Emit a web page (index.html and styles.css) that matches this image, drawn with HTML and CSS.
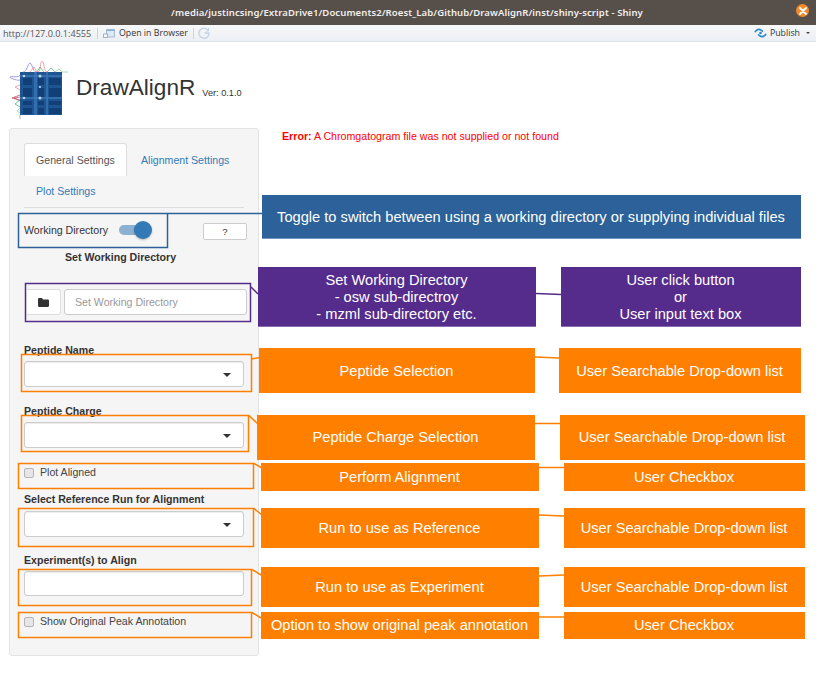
FILE: index.html
```html
<!DOCTYPE html>
<html lang="en">
<head>
<meta charset="utf-8">
<title>DrawAlignR</title>
<link rel="stylesheet" href="styles.css">
</head>
<body>
<header class="titlebar">
  <span class="titlebar-text">/media/justincsing/ExtraDrive1/Documents2/Roest_Lab/Github/DrawAlignR/inst/shiny-script - Shiny</span>
  <span class="close-btn"><svg width="8" height="8" viewBox="0 0 8 8"><path d="M1 1 7 7M7 1 1 7" stroke="#fff" stroke-width="1.8" stroke-linecap="round"/></svg></span>
</header>
<nav class="toolbar">
  <span class="url">http://127.0.0.1:4555</span>
  <span class="tool-sep"></span>
  <svg class="open-icon" width="12" height="10" viewBox="0 0 12 10"><path d="M3.5 1.5h8v7.5h-8z" fill="#dfe9f3" stroke="#8fb0cf" stroke-width=".8"/><path d="M3.5 1.5h8v1.5h-8z" fill="#8fb0cf"/><path d="M.5 6h4v3.5h-4z" fill="#fff" stroke="#7f9fbd" stroke-width=".8"/></svg>
  <span class="open-text">Open in Browser</span>
  <span class="tool-sep"></span>
  <svg class="refresh-icon" width="12" height="12" viewBox="0 0 12 12"><path d="M10.200 3.500A5 5 0 1 0 11 6H6.500" fill="none" stroke="#c3d2e2" stroke-width="1.300"/><path d="M10.500 1V4H7.500" fill="none" stroke="#c3d2e2" stroke-width="1"/></svg>
  <span class="publish">
    <svg width="13" height="10" viewBox="0 0 13 10"><path d="M1 4.2C2 1.6 5 .4 7.4 2.4L9 3.6" fill="none" stroke="#2e8bc9" stroke-width="1.7"/><path d="M12 5.8C11 8.4 8 9.600 5.600 7.600L4 6.400" fill="none" stroke="#2e8bc9" stroke-width="1.700"/><circle cx="6.500" cy="5" r="1.300" fill="#2e8bc9"/></svg>
    <span class="publish-text">Publish</span>
    <span class="publish-caret"></span>
  </span>
</nav>
<div class="app-header">
  <svg class="logo" width="60" height="62" viewBox="0 0 60 62">
    <rect x="10" y="11" width="42" height="43" fill="#1c5592"/>
    <g fill="#123f78">
      <rect x="13" y="17" width="9" height="7"/><rect x="28" y="17" width="6" height="7"/><rect x="39" y="17" width="12" height="7"/>
      <rect x="13" y="27" width="9" height="9"/><rect x="28" y="27" width="6" height="9"/><rect x="39" y="27" width="12" height="9"/>
      <rect x="13" y="40" width="9" height="4"/><rect x="28" y="40" width="6" height="4"/><rect x="39" y="40" width="12" height="4"/>
      <rect x="13" y="47" width="9" height="6"/><rect x="28" y="47" width="6" height="6"/><rect x="39" y="47" width="12" height="6"/>
    </g>
    <g fill="#3d78b8" fill-opacity=".7">
      <rect x="10" y="14" width="42" height="2"/><rect x="10" y="36" width="42" height="2"/><rect x="24" y="11" width="3" height="43"/><rect x="36" y="11" width="2" height="43"/>
    </g>
    <g fill="#b9d2e6"><circle cx="14" cy="15" r="1.300"/><circle cx="30" cy="15" r="1.500"/><circle cx="30" cy="26" r="1.100"/><circle cx="14" cy="37" r="1.300"/><circle cx="30" cy="37" r="1.500"/></g>
    <path d="M13 11C17 11 18 2 20 2S23 11 26 11" fill="none" stroke="#8a7fdc" stroke-width=".8"/>
    <path d="M20 11 24 6 27 11M28 11C31 11 30 0 32 0S34 11 37 11" fill="none" stroke="#ee8a98" stroke-width=".8"/>
    <path d="M27 11 30 6 34 11" fill="none" stroke="#4fae72" stroke-width=".8"/>
    <path d="M37 11 41 7 45 11" fill="none" stroke="#5cb58a" stroke-width=".8"/>
    <path d="M45 11 49 8 52 11H58" fill="none" stroke="#8fd59c" stroke-width=".8"/>
    <path d="M10 14C10 17 1 15 0 16S8 20 10 19" fill="none" stroke="#8a7fdc" stroke-width=".8"/>
    <path d="M10 24 5 26 10 29" fill="none" stroke="#ee8a98" stroke-width=".8"/>
    <path d="M10 34 2 37 10 39M10 36 4 37 10 40" fill="none" stroke="#c0506a" stroke-width=".8"/>
    <path d="M10 39 5 43 10 46" fill="none" stroke="#4fae72" stroke-width=".8"/>
    <path d="M10 47 7 50 10 52" fill="none" stroke="#8fd59c" stroke-width=".8"/>
    <path d="M10 54V58" stroke="#888" stroke-width=".6"/>
  </svg>
  <h1 class="app-title">DrawAlignR</h1>
  <span class="version">Ver: 0.1.0</span>
</div>
<main class="layout">
  <aside class="well">
    <ul class="tabs">
      <li class="tab tab-active">General Settings</li>
      <li class="tab tab-align">Alignment Settings</li>
      <li class="tab tab-plot">Plot Settings</li>
    </ul>
    <div class="wd-row">
      <span class="wd-label">Working Directory</span>
      <span class="switch"><span class="knob"></span></span>
      <span class="help-btn">?</span>
    </div>
    <div class="wd-title">Set Working Directory</div>
    <div class="dir-row">
      <span class="folder-btn"><svg width="11" height="9" viewBox="0 0 11 9"><path d="M0 1.200C0 .5.500 0 1.200 0H4l1 1.400h4.800c.7 0 1.200.5 1.200 1.200v5.200c0 .7-.5 1.200-1.200 1.200H1.200C.5 9 0 8.500 0 7.800z" fill="#333"/></svg></span>
      <span class="dir-input">Set Working Directory</span>
    </div>
    <label class="field-label label-name">Peptide Name</label>
    <div class="select"><span class="caret"></span></div>
    <label class="field-label label-charge">Peptide Charge</label>
    <div class="select"><span class="caret"></span></div>
    <div class="check-row check-aligned"><span class="checkbox"></span><span>Plot Aligned</span></div>
    <label class="field-label label-ref">Select Reference Run for Alignment</label>
    <div class="select select-ref"><span class="caret"></span></div>
    <label class="field-label label-exp">Experiment(s) to Align</label>
    <div class="select select-plain"></div>
    <div class="check-row check-peak"><span class="checkbox"></span><span>Show Original Peak Annotation</span></div>
  </aside>
  <p class="error"><strong>Error:</strong> A Chromgatogram file was not supplied or not found</p>
</main>

<svg class="connectors" width="816" height="680" viewBox="0 0 816 680">
  <g fill="none" stroke="#2c6299" stroke-width="1.500">
    <rect x="18.500" y="213.500" width="149" height="34"/>
    <path d="M168 213.500H262"/>
  </g>
  <g fill="none" stroke="#552c8c" stroke-width="1.500">
    <rect x="25.500" y="283.500" width="225" height="38"/>
    <path d="M251 287 258 294M536 293.500 561 294.500"/>
  </g>
  <g fill="none" stroke="#ff8000" stroke-width="1.500">
    <rect x="21.500" y="354.500" width="230" height="37"/>
    <rect x="21.500" y="415.500" width="227" height="36"/>
    <rect x="18.500" y="463.500" width="235" height="25"/>
    <rect x="18.500" y="508.500" width="235" height="38"/>
    <rect x="18.500" y="569.500" width="233" height="36"/>
    <rect x="18.500" y="612.500" width="233" height="25"/>
    <path d="M251 359 260 357.500M535 357 559 358"/>
    <path d="M249 415.500 258 424M535 423.500H560"/>
    <path d="M254 463.500 262 468M539 467.500H564"/>
    <path d="M254 508.500 262 515M539 515 564 516"/>
    <path d="M252 569.500 261 575M539 576 564 575"/>
    <path d="M252 612.500 261 618M539 617H564"/>
  </g>
</svg>

<div class="note note-blue note-low n-toggle">Toggle to switch between using a working directory or supplying individual files</div>
<div class="note note-purple note-low n-wd">Set Working Directory<br>- osw sub-directroy<br>- mzml sub-directory etc.</div>
<div class="note note-purple note-low n-click">User click button<br>or<br>User input text box</div>
<div class="note note-orange note-low n-pep">Peptide Selection</div>
<div class="note note-orange note-low n-pep-r">User Searchable Drop-down list</div>
<div class="note note-orange n-chg">Peptide Charge Selection</div>
<div class="note note-orange n-chg-r">User Searchable Drop-down list</div>
<div class="note note-orange n-aln">Perform Alignment</div>
<div class="note note-orange n-aln-r">User Checkbox</div>
<div class="note note-orange n-ref">Run to use as Reference</div>
<div class="note note-orange n-ref-r">User Searchable Drop-down list</div>
<div class="note note-orange n-exp">Run to use as Experiment</div>
<div class="note note-orange n-exp-r">User Searchable Drop-down list</div>
<div class="note note-orange n-opt">Option to show original peak annotation</div>
<div class="note note-orange n-opt-r">User Checkbox</div>
</body>
</html>
```
FILE: styles.css
```css
* { box-sizing: border-box; }
html, body { margin: 0; padding: 0; }
body {
  position: relative;
  width: 816px;
  height: 680px;
  overflow: hidden;
  background: #fff;
  color: #333;
  font-family: "Liberation Sans", Arial, sans-serif;
  font-size: 10.6px;
}

/* Window chrome */
.titlebar {
  position: relative;
  height: 25px;
  background: #57504a;
  display: flex;
  align-items: center;
  justify-content: center;
  color: #f2efec;
}
.titlebar-text {
  font-family: "Noto Sans", sans-serif;
  font-weight: 600;
  font-size: 9.5px;
  letter-spacing: 0.1px;
  margin-left: -2px;
}
.close-btn {
  position: absolute;
  left: 796px;
  top: 4px;
  width: 13px;
  height: 13px;
  border-radius: 50%;
  background: #f08a2c;
  display: flex;
  align-items: center;
  justify-content: center;
}
.toolbar {
  height: 17px;
  display: flex;
  align-items: center;
  padding: 0 3px;
  background: linear-gradient(#f7f8fa, #eceff3);
  border-bottom: 1px solid #dfe2e6;
  font-family: "Open Sans", sans-serif;
  font-size: 8.800px;
  color: #333;
}
.url { color: #555; width: 91px; flex: none; white-space: nowrap; font-size: 9.100px; }
.tool-sep { width: 1px; height: 11px; background: #cfd3d8; margin: 0 5px 0 3px; flex: none; }
.open-icon { margin: 0 4px 0 0; flex: none; }
.open-text { white-space: nowrap; margin-right: 2px; }
.refresh-icon { margin-left: -1px; flex: none; }
.publish { margin-left: auto; display: flex; align-items: center; gap: 3px; padding-right: 3px; }
.publish-caret {
  width: 0; height: 0; margin-left: 3px;
  border-left: 2.500px solid transparent;
  border-right: 2.500px solid transparent;
  border-top: 2.500px solid #444;
}

/* App header */
.app-header {
  height: 86px;
  display: flex;
  align-items: flex-start;
  padding: 19px 0 0 10px;
}
.logo { flex: none; }
.app-title {
  margin: 12px 0 0 6px;
  font-size: 22.600px;
  line-height: 30px;
  font-weight: 400;
  color: #333;
}
.version { margin: 27px 0 0 7px; font-size: 9.200px; line-height: 10px; }

/* Layout */
.layout { display: flex; align-items: flex-start; padding-left: 9px; }
.well {
  width: 250px;
  height: 528px;
  flex: none;
  background: #f5f5f5;
  border: 1px solid #e3e3e3;
  border-radius: 3px;
  padding: 14px 14px 0;
}
.error { margin: 2px 0 0 23px; color: #f00; line-height: 13px; font-size: 10.650px; }
.error strong { font-weight: 700; }

/* Tabs */
.tabs {
  list-style: none;
  margin: 0;
  padding: 0;
  width: 220px;
  display: flex;
  flex-wrap: wrap;
  border-bottom: 1px solid #ddd;
}
.tab {
  padding: 0 12px;
  color: #337ab7;
}
.tab-align { height: 33px; line-height: 35px; }
.tab-plot { height: 31px; line-height: 31px; }
.tab-active {
  width: 103px;
  height: 33px;
  margin-right: 2px;
  color: #555;
  background: #fff;
  border: 1px solid #ddd;
  border-bottom: 0;
  border-radius: 3px 3px 0 0;
  padding: 0 11px;
  line-height: 33px;
  white-space: nowrap;
}

/* Working directory */
.wd-row { display: flex; align-items: center; height: 24px; margin-top: 10px; }
.wd-label { width: 95px; flex: none; white-space: nowrap; }
.switch {
  position: relative;
  display: block;
  flex: none;
  width: 30px;
  height: 10px;
  border-radius: 5px;
  background: #8cb0d0;
}
.knob {
  position: absolute;
  left: 15px;
  top: -4px;
  width: 18px;
  height: 18px;
  border-radius: 50%;
  background: #337ab7;
  box-shadow: 0 1px 2px rgba(0, 0, 0, .25);
}
.help-btn {
  flex: none;
  width: 44px;
  height: 17px;
  margin: 2px 0 0 54px;
  background: #fff;
  border: 1px solid #ccc;
  border-radius: 2px;
  text-align: center;
  line-height: 15px;
  font-size: 9.500px;
}
.wd-title { margin: 9px 0 0 41px; font-weight: 700; line-height: 13px; }
.dir-row { display: flex; gap: 3px; margin: 25px 0 0 3px; height: 26px; width: 220px; }
.folder-btn {
  flex: none;
  width: 34px;
  background: #fff;
  border: 1px solid #ddd;
  border-left: 0;
  border-radius: 0 3px 3px 0;
  display: flex;
  align-items: center;
  justify-content: center;
}
.dir-input {
  flex: none;
  width: 183px;
  background: #fff;
  border: 1px solid #ccc;
  border-radius: 3px;
  padding-left: 10px;
  line-height: 24px;
  color: #999;
}

/* Fields */
.field-label { display: block; font-weight: 700; line-height: 13px; }
.label-name { margin-top: 29px; }
.label-charge { margin-top: 18px; }
.label-ref { margin-top: 14px; }
.label-exp { margin-top: 17px; }
.select {
  position: relative;
  width: 220px;
  height: 26px;
  margin-top: 4px;
  background: #fff;
  border: 1px solid #ccc;
  border-radius: 3px;
  box-shadow: inset 0 1px 1px rgba(0, 0, 0, .075);
}
.select-ref { margin-top: 5px; }
.select-plain { height: 25px; }
.caret {
  position: absolute;
  left: 198px;
  top: 11px;
  width: 0;
  height: 0;
  border-left: 4px solid transparent;
  border-right: 4px solid transparent;
  border-top: 4px solid #333;
}
.check-row { display: flex; align-items: center; gap: 6px; line-height: 13px; color: #444; }
.check-aligned { margin-top: 18px; }
.check-peak { margin-top: 19px; }
.checkbox {
  flex: none;
  width: 10px;
  height: 10px;
  background: #e6e6e6;
  border: 1px solid #b5b5b5;
  border-radius: 2px;
}

/* Annotation canvas, laid over the app */
.connectors { position: absolute; left: 0; top: 0; pointer-events: none; }
.note {
  position: absolute;
  display: flex;
  align-items: center;
  justify-content: center;
  text-align: center;
  padding-right: 1px;
  color: #fff;
  font-size: 14.650px;
  line-height: 17px;
}
.note-blue { background: #2c6299; border-bottom: 1px solid #6f97bf; }
.note-purple { background: #552c8c; border-bottom: 1px solid #8a6cb2; }
.note-orange { background: #ff8000; }
.note-low { padding-top: 2px; }
.n-toggle { left: 262px; top: 195px; width: 539px; height: 44px; }
.n-wd { left: 258px; top: 267px; width: 278px; height: 60px; }
.n-click { left: 561px; top: 267px; width: 240px; height: 60px; }
.n-pep { left: 259px; top: 348px; width: 276px; height: 45px; }
.n-pep-r { left: 559px; top: 348px; width: 242px; height: 45px; }
.n-chg { left: 257px; top: 415px; width: 278px; height: 45px; }
.n-chg-r { left: 560px; top: 415px; width: 245px; height: 45px; }
.n-aln { left: 261px; top: 463px; width: 278px; height: 28px; }
.n-aln-r { left: 564px; top: 463px; width: 241px; height: 28px; }
.n-ref { left: 261px; top: 508px; width: 278px; height: 40px; }
.n-ref-r { left: 564px; top: 508px; width: 241px; height: 40px; }
.n-exp { left: 261px; top: 567px; width: 278px; height: 40px; }
.n-exp-r { left: 564px; top: 567px; width: 241px; height: 40px; }
.n-opt { left: 261px; top: 612px; width: 278px; height: 27px; }
.n-opt-r { left: 564px; top: 612px; width: 241px; height: 27px; }
```
